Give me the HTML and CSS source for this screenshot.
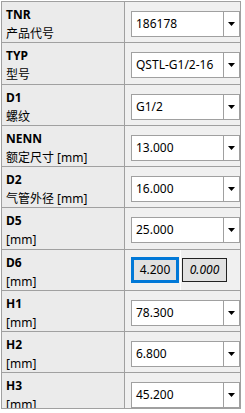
FILE: index.html
```html
<!DOCTYPE html>
<html lang="zh">
<head>
<meta charset="UTF-8">
<title>参数</title>
<link rel="stylesheet" href="styles.css">
</head>
<body>
<div class="panel">
  <div class="grid">
    <div class="label"><b>TNR</b><span>产品代号</span></div>
    <div class="value"><div class="combo"><span class="text">186178</span><span class="drop"><svg width="7" height="4" viewBox="0 0 7 4"><polygon points="0,0 7,0 3.5,4" fill="#000"/></svg></span></div></div>

    <div class="label"><b>TYP</b><span>型号</span></div>
    <div class="value"><div class="combo"><span class="text">QSTL-G1/2-16</span><span class="drop"><svg width="7" height="4" viewBox="0 0 7 4"><polygon points="0,0 7,0 3.5,4" fill="#000"/></svg></span></div></div>

    <div class="label"><b>D1</b><span>螺纹</span></div>
    <div class="value"><div class="combo"><span class="text">G1/2</span><span class="drop"><svg width="7" height="4" viewBox="0 0 7 4"><polygon points="0,0 7,0 3.5,4" fill="#000"/></svg></span></div></div>

    <div class="label"><b>NENN</b><span>额定尺寸 [mm]</span></div>
    <div class="value"><div class="combo"><span class="text">13.000</span><span class="drop"><svg width="7" height="4" viewBox="0 0 7 4"><polygon points="0,0 7,0 3.5,4" fill="#000"/></svg></span></div></div>

    <div class="label"><b>D2</b><span>气管外径 [mm]</span></div>
    <div class="value"><div class="combo"><span class="text">16.000</span><span class="drop"><svg width="7" height="4" viewBox="0 0 7 4"><polygon points="0,0 7,0 3.5,4" fill="#000"/></svg></span></div></div>

    <div class="label"><b>D5</b><span>[mm]</span></div>
    <div class="value"><div class="combo"><span class="text">25.000</span><span class="drop"><svg width="7" height="4" viewBox="0 0 7 4"><polygon points="0,0 7,0 3.5,4" fill="#000"/></svg></span></div></div>

    <div class="label"><b>D6</b><span>[mm]</span></div>
    <div class="value range">
      <div class="box focus">4.200</div>
      <div class="split"></div>
      <div class="box tol">0.000</div>
    </div>

    <div class="label"><b>H1</b><span>[mm]</span></div>
    <div class="value"><div class="combo"><span class="text">78.300</span><span class="drop"><svg width="7" height="4" viewBox="0 0 7 4"><polygon points="0,0 7,0 3.5,4" fill="#000"/></svg></span></div></div>

    <div class="label"><b>H2</b><span>[mm]</span></div>
    <div class="value"><div class="combo"><span class="text">6.800</span><span class="drop"><svg width="7" height="4" viewBox="0 0 7 4"><polygon points="0,0 7,0 3.5,4" fill="#000"/></svg></span></div></div>

    <div class="label"><b>H3</b><span>[mm]</span></div>
    <div class="value"><div class="combo"><span class="text">45.200</span><span class="drop"><svg width="7" height="4" viewBox="0 0 7 4"><polygon points="0,0 7,0 3.5,4" fill="#000"/></svg></span></div></div>
  </div>
</div>
</body>
</html>
```

FILE: styles.css
```css
body {
  margin: 0;
  padding: 1px 0 0 1px;
  background-color: #fff;
  font-family: "Noto Sans", "Noto Sans CJK SC", sans-serif;
  font-size: 12px;
  color: #000;
}
.panel {
  width: 240px;
  height: 408px;
  box-sizing: border-box;
  border: 1px solid #a0a0a0;
  overflow: hidden;
  background-color: #a0a0a0;
}
.grid {
  display: grid;
  grid-template-columns: 122px 115px;
  grid-auto-rows: 40.25px;
  gap: 1px;
  background-color: #a0a0a0;
}
.label {
  background-color: #ebebeb;
  padding: 3px 0 0 4px;
  line-height: 19px;
  white-space: nowrap;
}
.label b,
.label span {
  display: block;
}
.value {
  background-color: #f0f0f0;
  padding: 9px 0 0 6px;
  box-sizing: border-box;
}
.combo {
  display: flex;
  width: 109px;
  height: 26px;
  box-sizing: border-box;
  border: 1px solid #a0a0a0;
  background-color: #fff;
}
.combo .text {
  flex: 1;
  padding-left: 4px;
  line-height: 24px;
  white-space: nowrap;
  overflow: hidden;
}
.combo .drop {
  width: 15px;
  border-left: 1px solid #a0a0a0;
  display: flex;
  align-items: center;
  justify-content: center;
}
.range {
  display: flex;
  align-items: center;
  padding-top: 0;
}
.box {
  box-sizing: border-box;
  text-align: center;
  background-color: #e1e1e1;
}
.box.focus {
  width: 48px;
  height: 26px;
  line-height: 20px;
  border: 3px solid #0078d7;
}
.split {
  align-self: stretch;
  width: 1px;
  margin-left: 1px;
  background-color: #fff;
}
.box.tol {
  width: 45px;
  height: 24px;
  line-height: 22px;
  margin-left: 1px;
  border: 1px solid #222;
  font-style: italic;
}
```
